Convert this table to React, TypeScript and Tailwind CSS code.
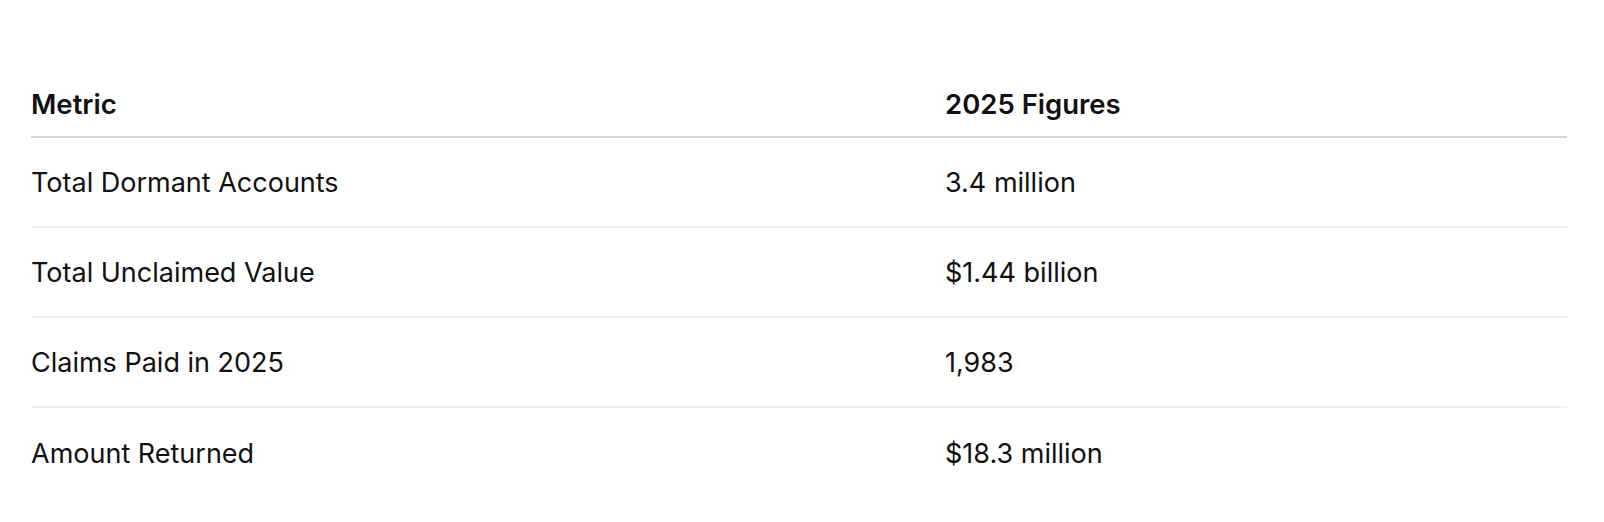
import React from "react";

const rows: [string, string][] = [
  ["Total Dormant Accounts", "3.4 million"],
  ["Total Unclaimed Value", "$1.44 billion"],
  ["Claims Paid in 2025", "1,983"],
  ["Amount Returned", "$18.3 million"],
];

export default function App() {
  return (
    <div className="w-[1604px] h-[522px] bg-white pl-[31px] pr-[37px] pt-[74px] text-[#111111] font-['Inter',_'Noto_Sans',_sans-serif]">
      <div className="flex flex-col">
        <div className="grid grid-cols-[914px_1fr] h-[64px] items-center border-b-2 border-[#d6d6d6] font-semibold text-[27.5px]">
          <div>Metric</div>
          <div>2025 Figures</div>
        </div>
        {rows.map(([a, b], i) => (
          <div
            key={a}
            className={
              i < rows.length - 1
                ? "grid grid-cols-[914px_1fr] h-[90px] pt-[2px] items-center border-b-2 border-[#f0f0f0] text-[27px]"
                : "grid grid-cols-[914px_1fr] h-[90px] pt-[2px] items-center text-[27px]"
            }
          >
            <div>{a}</div>
            <div>{b}</div>
          </div>
        ))}
      </div>
    </div>
  );
}
